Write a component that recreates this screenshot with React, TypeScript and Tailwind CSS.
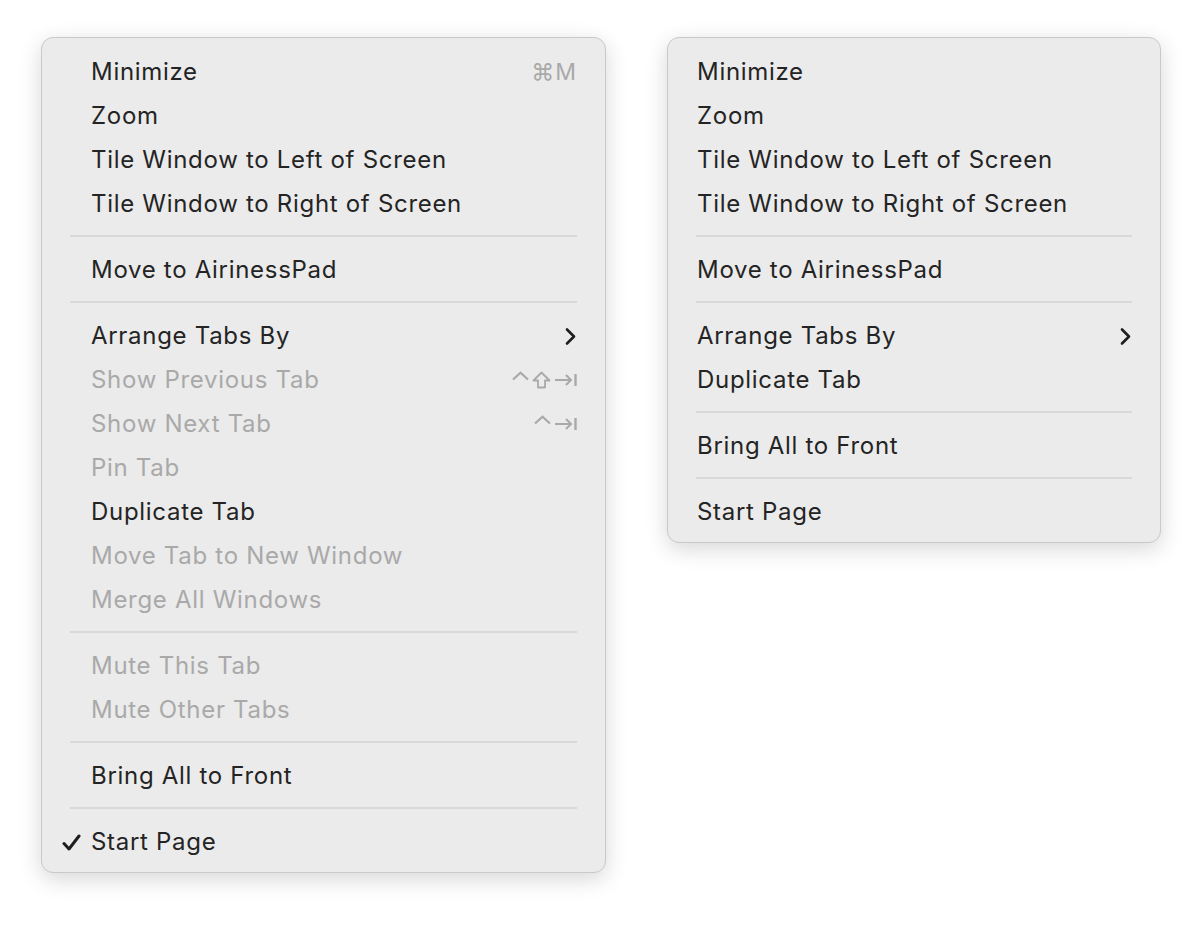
import React from "react";

type Item = {
  label?: string;
  sep?: boolean;
  disabled?: boolean;
  checked?: boolean;
  submenu?: boolean;
  shortcut?: React.ReactNode;
};

const Caret = () => (
  <svg width="17" height="10" viewBox="0 0 17 10" fill="none" stroke="currentColor" strokeWidth="2.2" className="-translate-y-[4px]">
    <polyline points="1,8.5 8.5,1.8 16,8.5" />
  </svg>
);

const Shift = () => (
  <svg width="19" height="18" viewBox="0 0 19 18" fill="none" stroke="currentColor" strokeWidth="1.8" strokeLinejoin="round">
    <path d="M9.5 1.5 L17.5 9.5 H13 V16.5 H6 V9.5 H1.5 Z" />
  </svg>
);

const TabKey = () => (
  <svg width="23" height="16" viewBox="0 0 23 16" fill="none" stroke="currentColor" strokeWidth="2">
    <line x1="1" y1="8" x2="17" y2="8" />
    <polyline points="12,3 17,8 12,13" />
    <line x1="21.5" y1="2" x2="21.5" y2="14" strokeWidth="2.4" />
  </svg>
);

const Chevron = () => (
  <svg width="13" height="19" viewBox="0 0 13 19" fill="none" stroke="currentColor" strokeWidth="2.6" strokeLinecap="round" strokeLinejoin="round">
    <polyline points="3,2.5 10,9.5 3,16.5" />
  </svg>
);

const Check = () => (
  <svg width="19" height="17" viewBox="0 0 19 17" fill="none" stroke="currentColor" strokeWidth="3" strokeLinecap="round" strokeLinejoin="round">
    <polyline points="2,9.5 7,15 17,2" />
  </svg>
);

const leftItems: Item[] = [
  { label: "Minimize", shortcut: <span className="text-[23px] tracking-[1px]">⌘M</span> },
  { label: "Zoom" },
  { label: "Tile Window to Left of Screen" },
  { label: "Tile Window to Right of Screen" },
  { sep: true },
  { label: "Move to AirinessPad" },
  { sep: true },
  { label: "Arrange Tabs By", submenu: true },
  {
    label: "Show Previous Tab",
    disabled: true,
    shortcut: (
      <span className="flex items-center gap-[3px]">
        <Caret />
        <Shift />
        <TabKey />
      </span>
    ),
  },
  {
    label: "Show Next Tab",
    disabled: true,
    shortcut: (
      <span className="flex items-center gap-[3px]">
        <Caret />
        <TabKey />
      </span>
    ),
  },
  { label: "Pin Tab", disabled: true },
  { label: "Duplicate Tab" },
  { label: "Move Tab to New Window", disabled: true },
  { label: "Merge All Windows", disabled: true },
  { sep: true },
  { label: "Mute This Tab", disabled: true },
  { label: "Mute Other Tabs", disabled: true },
  { sep: true },
  { label: "Bring All to Front" },
  { sep: true },
  { label: "Start Page", checked: true },
];

const rightItems: Item[] = [
  { label: "Minimize" },
  { label: "Zoom" },
  { label: "Tile Window to Left of Screen" },
  { label: "Tile Window to Right of Screen" },
  { sep: true },
  { label: "Move to AirinessPad" },
  { sep: true },
  { label: "Arrange Tabs By", submenu: true },
  { label: "Duplicate Tab" },
  { sep: true },
  { label: "Bring All to Front" },
  { sep: true },
  { label: "Start Page" },
];

function Menu({ items, width, checkCol }: { items: Item[]; width: string; checkCol: boolean }) {
  return (
    <div
      className={`${width} bg-[#ebebeb] border border-[#c9c9c9] rounded-[12px] pt-[12px] pb-[8px] shadow-[0_6px_22px_rgba(0,0,0,0.16)]`}
    >
      {items.map((it, i) =>
        it.sep ? (
          <div key={i} className="h-[22px] pt-[9px] px-[28px]">
            <div className="h-[2px] w-full bg-[#d8d8d8]" />
          </div>
        ) : (
          <div
            key={i}
            className={`h-[44px] flex items-center pr-[28px] ${checkCol ? "pl-[20px]" : "pl-[29px]"} ${
              it.disabled ? "text-[#a9a9a9]" : "text-[#242424]"
            }`}
          >
            {checkCol && (
              <span className="w-[29px] flex items-center text-[#1e1e1e]">{it.checked && <Check />}</span>
            )}
            <span className="flex-1 text-[24px] leading-none tracking-[0.7px]">{it.label}</span>
            {it.shortcut && <span className="text-[#a9a9a9] flex items-center">{it.shortcut}</span>}
            {it.submenu && (
              <span className="text-[#1e1e1e] flex items-center">
                <Chevron />
              </span>
            )}
          </div>
        )
      )}
    </div>
  );
}

export default function App() {
  return (
    <div
      className="min-h-[926px] w-[1200px] bg-white flex items-start gap-[61px] pl-[41px] pt-[37px]"
      style={{ fontFamily: "Inter, 'Noto Sans', sans-serif" }}
    >
      <Menu items={leftItems} width="w-[565px]" checkCol />
      <Menu items={rightItems} width="w-[494px]" checkCol={false} />
    </div>
  );
}
